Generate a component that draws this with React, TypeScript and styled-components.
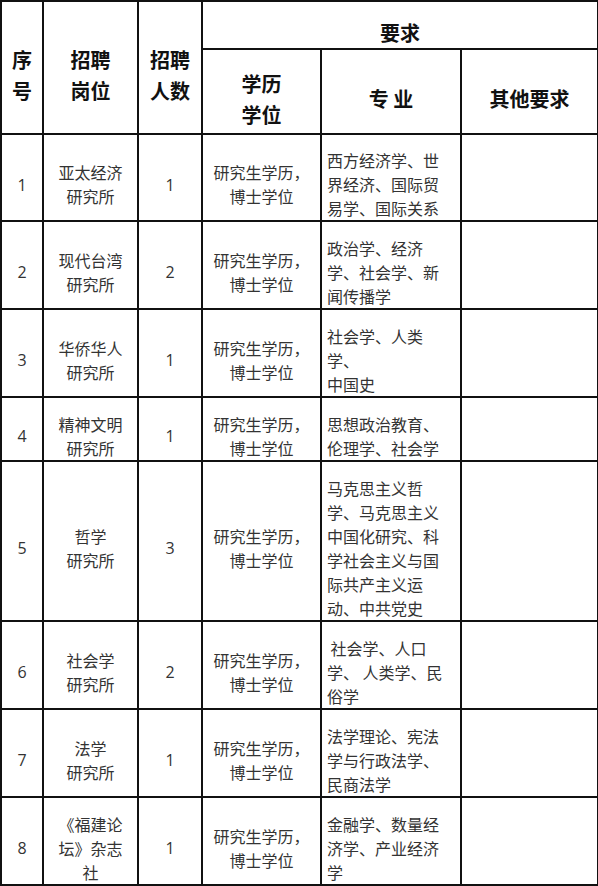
import React from "react";
import styled, { createGlobalStyle } from "styled-components";

const GlobalStyle = createGlobalStyle`
  html, body {
    margin: 0;
    padding: 0;
    background: #fff;
  }
  body {
    font-family: "Noto Sans CJK SC", "Noto Sans", sans-serif;
  }
`;

type Post = {
  no: number;
  dept: string[];
  count: number;
  majors: string[];
  height: number;
};

const posts: Post[] = [
  { no: 1, dept: ["亚太经济", "研究所"], count: 1, majors: ["西方经济学、世", "界经济、国际贸", "易学、国际关系"], height: 86 },
  { no: 2, dept: ["现代台湾", "研究所"], count: 2, majors: ["政治学、经济", "学、社会学、新", "闻传播学"], height: 88 },
  { no: 3, dept: ["华侨华人", "研究所"], count: 1, majors: ["社会学、人类", "学、", "中国史"], height: 88 },
  { no: 4, dept: ["精神文明", "研究所"], count: 1, majors: ["思想政治教育、", "伦理学、社会学"], height: 64 },
  {
    no: 5,
    dept: ["哲学", "研究所"],
    count: 3,
    majors: ["马克思主义哲", "学、马克思主义", "中国化研究、科", "学社会主义与国", "际共产主义运", "动、中共党史"],
    height: 160,
  },
  { no: 6, dept: ["社会学", "研究所"], count: 2, majors: ["\u00a0社会学、人口", "学、\u00a0人类学、民", "俗学"], height: 88 },
  { no: 7, dept: ["法学", "研究所"], count: 1, majors: ["法学理论、宪法", "学与行政法学、", "民商法学"], height: 88 },
  { no: 8, dept: ["《福建论", "坛》杂志", "社"], count: 1, majors: ["金融学、数量经", "济学、产业经济", "学"], height: 88 },
];

const Sheet = styled.table`
  border-collapse: collapse;
  table-layout: fixed;
  width: 598px;
  margin: 0;
`;

const Row = styled.tr<{ $h: number }>`
  height: ${(p) => p.$h}px;
`;

const HeadCell = styled.th`
  border: 2px solid #111;
  padding: 14px 2px 0;
  font-size: 20px;
  font-weight: 700;
  line-height: 31px;
  color: #111;
  text-align: center;
  vertical-align: middle;
`;

const Cell = styled.td<{ $left?: boolean }>`
  border: 2px solid #111;
  padding: 13px ${(p) => (p.$left ? "2px 0 5px" : "2px 0")};
  font-size: 16px;
  line-height: 24px;
  color: #333;
  text-align: ${(p) => (p.$left ? "left" : "center")};
  vertical-align: middle;
  white-space: nowrap;
`;

const Num = styled.span`
  font-family: "Open Sans", "Noto Sans", sans-serif;
  font-size: 16px;
`;

const Line = styled.div``;

function Lines({ items }: { items: string[] }) {
  return (
    <>
      {items.map((t, i) => (
        <Line key={i}>{t}</Line>
      ))}
    </>
  );
}

export default function App() {
  return (
    <>
      <GlobalStyle />
      <Sheet>
        <colgroup>
          <col style={{ width: 42 }} />
          <col style={{ width: 95 }} />
          <col style={{ width: 64 }} />
          <col style={{ width: 119 }} />
          <col style={{ width: 140 }} />
          <col style={{ width: 137 }} />
        </colgroup>
        <thead>
          <Row $h={48}>
            <HeadCell rowSpan={2}>
              <Lines items={["序", "号"]} />
            </HeadCell>
            <HeadCell rowSpan={2}>
              <Lines items={["招聘", "岗位"]} />
            </HeadCell>
            <HeadCell rowSpan={2}>
              <Lines items={["招聘", "人数"]} />
            </HeadCell>
            <HeadCell colSpan={3}>要求</HeadCell>
          </Row>
          <Row $h={85}>
            <HeadCell>
              <Lines items={["学历", "学位"]} />
            </HeadCell>
            <HeadCell>专 业</HeadCell>
            <HeadCell>其他要求</HeadCell>
          </Row>
        </thead>
        <tbody>
          {posts.map((p) => (
            <Row key={p.no} $h={p.height}>
              <Cell>
                <Num>{p.no}</Num>
              </Cell>
              <Cell>
                <Lines items={p.dept} />
              </Cell>
              <Cell>
                <Num>{p.count}</Num>
              </Cell>
              <Cell>
                <Lines items={["研究生学历，", "博士学位"]} />
              </Cell>
              <Cell $left>
                <Lines items={p.majors} />
              </Cell>
              <Cell />
            </Row>
          ))}
        </tbody>
      </Sheet>
    </>
  );
}
